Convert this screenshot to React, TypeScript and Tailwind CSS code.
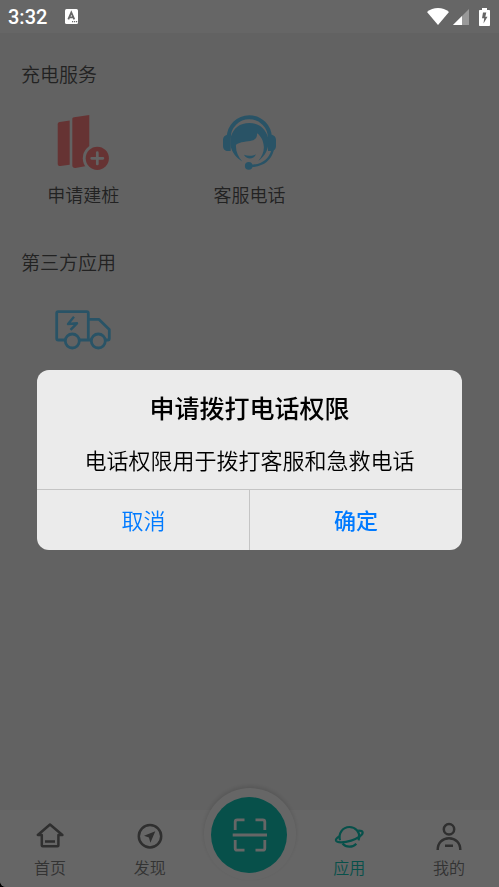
import React from 'react';

const PileIcon = () => (
  <svg className="w-14 h-14" viewBox="0 0 56 56" fill="#ff8080" aria-hidden="true">
    <path d="M2.700 10.200c0-1.300.7-2 2-2.200l10-1.500v44.200L5.500 52c-1.700.2-2.800-.6-2.800-2z" />
    <path d="M17.300 5c0-1 .6-1.700 1.700-1.800L34.300 1v50.600L20.500 54c-2 .2-3.200-.8-3.200-2.400z" />
    <circle cx="42.300" cy="44.300" r="14.500" fill="#f5f5f5" />
    <circle cx="42.300" cy="44.300" r="11.600" />
    <path d="M42.300 38.700v11.200M36.700 44.300h11.200" stroke="#f5f5f5" strokeWidth="2.700" strokeLinecap="round" />
  </svg>
);

const ServiceIcon = () => (
  <svg className="w-14 h-14" viewBox="-1 0 56 56" fill="#66d0ff" aria-hidden="true">
    <path d="M6.700 23.800a20.600 20.600 0 0 1 41.200 0" fill="none" stroke="#66d0ff" strokeWidth="4" />
    <path d="M8.700 20.700V37H6c-3 0-5-2-5-5v-6c0-3 2-5.300 5-5.300zM46 20.700V37h3c3 0 5-2 5-5v-6c0-3-2-5.300-5-5.300z" />
    <path d="M8.500 24C11 14 18 9 27.300 9S43.500 14 46.200 24v7.500c-1 6.500-4.500 11.500-10 15.500 4-5 6-10 5.600-14.500C41.500 27 39 22 35 19.300c.3 3.200-1 6.200-5 7.300-4.500 1.400-12 1-16 4.200-.4 6.200 2 11.700 6.300 16.700C14.500 44 9.500 38.500 8.500 31z" />
    <path d="M22 40.700c3.500 1.600 8.500 1.500 12-.4-2.500 5.700-9.500 5.500-12 .4z" />
    <path d="M50.700 36c-2.700 9.500-10 15.500-22 16" fill="none" stroke="#66d0ff" strokeWidth="2.500" />
    <circle cx="26.700" cy="51.900" r="3.800" />
  </svg>
);

const TruckIcon = () => (
  <svg
    className="w-14 h-14"
    viewBox="0 -8 56 56"
    fill="none"
    stroke="#66d0ff"
    strokeWidth="2.800"
    strokeLinejoin="round"
    aria-hidden="true"
  >
    <path d="M10.300 30H3.200c-1 0-1.500-.5-1.500-1.500V3.200c0-1 .5-1.500 1.500-1.500h28.600c1 0 1.500.5 1.500 1.500V30M24.300 30h12M33.300 9.300h10.500l10.500 10.200V29c0 .8-.4 1-1 1h-3" />
    <circle cx="17.300" cy="31" r="7" />
    <circle cx="43.300" cy="31" r="7" />
    <path d="M19 6.700 13 14l9-.7-6.500 6.500" strokeWidth="2.400" />
  </svg>
);

const HomeIcon = () => (
  <svg className="w-7 h-7" viewBox="0 0 28 28" fill="none" stroke="#757575" strokeWidth="2.500" aria-hidden="true">
    <path d="M1.800 13h4v10.500c0 .5.300.8.800.8h15c.5 0 .8-.3.800-.8V13h4L14 2.500z" strokeLinejoin="round" />
    <path d="M9 19.500h10" />
  </svg>
);

const CompassIcon = () => (
  <svg className="w-7 h-7" viewBox="0 0 28 28" aria-hidden="true">
    <circle cx="14" cy="14.300" r="11.200" fill="none" stroke="#757575" strokeWidth="2.500" />
    <path d="M19.300 9.200 8 13.800l4.900 1.600 1.500 5.300z" fill="#757575" />
  </svg>
);

const PlanetIcon = () => (
  <svg className="w-7 h-7 overflow-visible" viewBox="0 0 28 28" fill="none" stroke="currentColor" strokeWidth="2.200" aria-hidden="true">
    <path d="M5 18.200C3.200 11.500 7.500 5 14.500 5c6.200 0 10.300 5.200 9.700 10.500-.1 1-.4 2-.8 2.900M7.500 21.500c3.500 4.200 10.200 4.200 13.800.2" />
    <path d="M4.600 14.200C2 15.700.5 17.300 1 18.600c1 2.400 8 2.200 15.200 0 7-2.200 12.200-6 11.400-8.500-.4-1.200-2-1.600-4.400-1.500" />
  </svg>
);

const PersonIcon = () => (
  <svg className="w-7 h-7 overflow-visible" viewBox="0 0 28 28" fill="none" stroke="#757575" strokeWidth="2.500" aria-hidden="true">
    <circle cx="14" cy="7.300" r="5.200" />
    <path d="M2.700 28c0-7.200 4.800-11.700 11.300-11.700S25.300 20.800 25.300 28M10 23.700h8" />
  </svg>
);

const ScanIcon = () => (
  <svg className="w-9 h-9" viewBox="-1 -1 36 36" fill="none" stroke="#fff" strokeWidth="2.800" aria-hidden="true">
    <path d="M12.500 1.800H5.200c-1.200 0-2 .8-2 2V12M23.500 1.800h7.300c1.200 0 2 .8 2 2V12M12.500 32.200H5.200c-1.200 0-2-.8-2-2V22M23.500 32.200h7.300c1.200 0 2-.8 2-2V22M.7 17h34.600" />
  </svg>
);

const sections = [
  {
    title: '充电服务',
    items: [
      { label: '申请建桩', icon: PileIcon },
      { label: '客服电话', icon: ServiceIcon },
    ],
  },
  { title: '第三方应用', items: [{ label: '', icon: TruckIcon }] },
];

const tabs = [
  { label: '首页', icon: HomeIcon },
  { label: '发现', icon: CompassIcon },
  null,
  { label: '应用', icon: PlanetIcon, active: true },
  { label: '我的', icon: PersonIcon },
];

function StatusBar() {
  return (
    <header className="relative z-20 h-[33px] px-2 flex items-center bg-[#666666] text-white">
      <span className="font-[Roboto] text-[20px] leading-6 font-medium">3:32</span>
      <svg className="w-[13px] h-[15px] ml-[18px]" viewBox="0 0 13 15" aria-hidden="true">
        <rect width="13" height="15" rx="1.500" fill="#fff" />
        <path d="M3.300 10.300 6.300 3.500l3 6.800M4.400 8.300h3.800" fill="none" stroke="#666" strokeWidth="1.800" />
        <path d="M7 12.700h1.200M9 12.700h1.200M11 12.700h1.200" stroke="#666" strokeWidth="1.200" />
      </svg>
      <div className="ml-auto flex items-center">
        <svg className="w-[22px] h-[17px]" viewBox="0 0 22 17" fill="#fff" aria-hidden="true">
          <path d="M0 4C6-1.200 16-1.200 22 4L11 17z" />
        </svg>
        <svg className="w-4 h-4 ml-1" viewBox="0 0 16 16" aria-hidden="true">
          <path d="M16 0v16H0z" fill="#999" />
          <path d="M9 7v9H0z" fill="#fff" />
        </svg>
        <svg className="w-[11px] h-[18px] ml-[10px] mr-px" viewBox="0 0 11 18" aria-hidden="true">
          <path d="M3 0h5v2h2c.6 0 1 .4 1 1v14c0 .6-.4 1-1 1H1c-.6 0-1-.4-1-1V3c0-.6.4-1 1-1h2z" fill="#fff" />
          <path d="M7.300 4.500H4L3 10.300h2.200L4.500 15.500l4-6.700H6.300z" fill="#666" />
        </svg>
      </div>
    </header>
  );
}

function TabBar() {
  return (
    <nav className="relative bg-white rounded-bl-md">
      {/* raised bump, its shadow falls on the page above */}
      <div className="absolute left-1/2 -top-[22px] -translate-x-1/2 w-[92px] h-[92px] rounded-full bg-white shadow-[0_-2px_4px_rgba(0,0,0,0.12)]" />
      <div className="relative grid grid-cols-5">
        {tabs.map((tab, i) =>
          tab ? (
            <a
              key={i}
              href="#"
              className={`flex flex-col items-center gap-[5px] pt-3 pb-2 ${tab.active ? 'text-[#12c8ba]' : 'text-[#808080]'}`}
            >
              <tab.icon />
              <span className="text-[16px] leading-6">{tab.label}</span>
            </a>
          ) : (
            <div key={i} className="flex justify-center">
              <button
                aria-label="扫码"
                className="w-[76px] h-[76px] shrink-0 -mt-[13px] rounded-full bg-[#12c8ba] flex items-center justify-center"
              >
                <ScanIcon />
              </button>
            </div>
          )
        )}
      </div>
    </nav>
  );
}

function PermissionDialog() {
  return (
    <div className="fixed inset-0 z-10 pt-8 flex items-center justify-center bg-black/60">
      <div
        role="alertdialog"
        aria-labelledby="dialog-title"
        aria-describedby="dialog-message"
        className="w-[85%] rounded-xl overflow-hidden bg-[#ebebeb] text-center text-black"
      >
        <div className="pt-[19px] pb-[15px] px-4">
          <h2 id="dialog-title" className="text-[25px] leading-9 font-medium">申请拨打电话权限</h2>
          <p id="dialog-message" className="mt-[19px] text-[22px] leading-[30px]">电话权限用于拨打客服和急救电话</p>
        </div>
        <div className="grid grid-cols-2 border-t border-[#c4c4c4] text-[22px] text-[#007aff]">
          <button className="h-[60px]">取消</button>
          <button className="h-[60px] border-l border-[#c4c4c4] font-medium">确定</button>
        </div>
      </div>
    </div>
  );
}

export default function App() {
  return (
    <div className="min-h-screen flex flex-col bg-black font-['Noto_Sans_CJK_SC',sans-serif] font-[350]">
      <StatusBar />
      <div className="flex-1 flex flex-col bg-[#f5f5f5] rounded-bl-md">
        <main className="flex-1 pt-7">
          {sections.map((section) => (
            <section key={section.title} className="mb-[43px]">
              <h2 className="pl-[21px] text-[19px] leading-[26px] font-[350] text-[#555555]">{section.title}</h2>
              <div className="mt-[27px] grid grid-cols-3">
                {section.items.map((item, i) => (
                  <button key={i} className="flex flex-col items-center gap-3 text-[18px] leading-6 text-[#555555]">
                    <item.icon />
                    {item.label && <span>{item.label}</span>}
                  </button>
                ))}
              </div>
            </section>
          ))}
        </main>
        <TabBar />
      </div>
      <PermissionDialog />
    </div>
  );
}
